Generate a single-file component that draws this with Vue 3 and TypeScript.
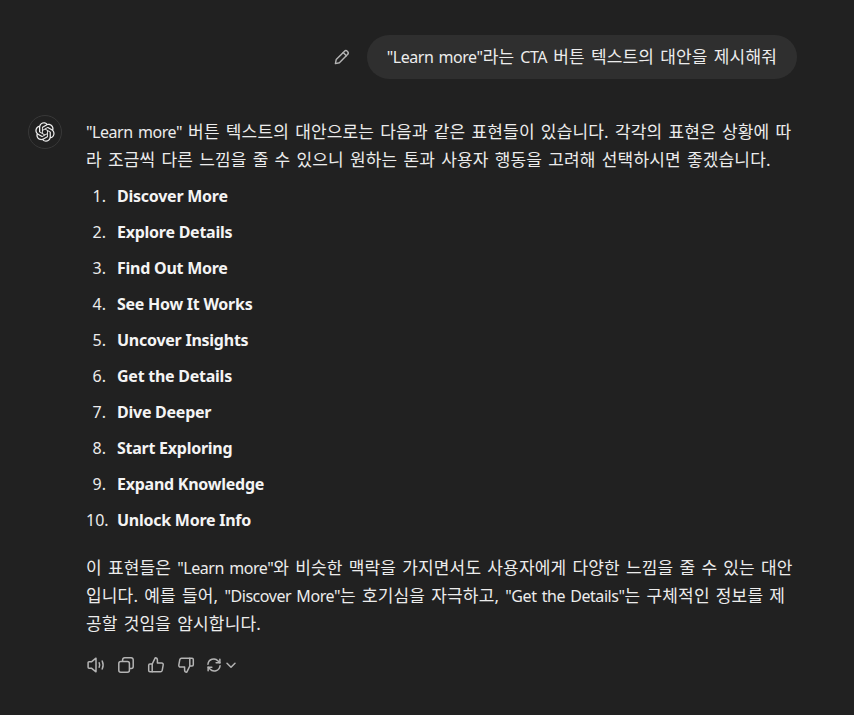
<script setup lang="ts">
const items: string[] = [
  'Discover More',
  'Explore Details',
  'Find Out More',
  'See How It Works',
  'Uncover Insights',
  'Get the Details',
  'Dive Deeper',
  'Start Exploring',
  'Expand Knowledge',
  'Unlock More Info',
]
</script>

<template>
  <main class="page">
    <section class="user-row">
      <svg class="pencil" width="18" height="18" viewBox="0 0 18 18" fill="none" stroke="currentColor" stroke-width="1.4" stroke-linejoin="round" stroke-linecap="round">
        <path d="M2.4 15.6l.8-4 8.1-8.2a2.2 2.2 0 0 1 3.2 3.2l-8.1 8.1z" />
        <path d="M10.2 4.6l3.2 3.2" />
      </svg>
      <div class="bubble korean"><span class="latin">"Learn more"</span>라는 <span class="latin">CTA</span> 버튼 텍스트의 대안을 제시해줘</div>
    </section>

    <section class="assistant-row">
      <div class="avatar">
        <svg width="20" height="20" viewBox="0 0 41 41" fill="currentColor">
          <path d="M37.5324 16.8707C37.9808 15.5241 38.1363 14.0974 37.9886 12.6859C37.8409 11.2744 37.3934 9.91076 36.676 8.68622C35.6126 6.83404 33.9882 5.3676 32.0373 4.4985C30.0864 3.62941 27.9098 3.40259 25.8215 3.85078C24.8796 2.7893 23.7219 1.94125 22.4257 1.36341C21.1295 0.785575 19.7249 0.491269 18.3058 0.500197C16.1708 0.495044 14.0893 1.16803 12.3614 2.42214C10.6335 3.67624 9.34853 5.44666 8.6917 7.47815C7.30085 7.76286 5.98686 8.3414 4.8377 9.17505C3.68854 10.0087 2.73073 11.0782 2.02839 12.312C0.956464 14.1591 0.498905 16.2988 0.721698 18.4228C0.944492 20.5467 1.83612 22.5449 3.268 24.1293C2.81966 25.4759 2.66413 26.9026 2.81182 28.3141C2.95951 29.7256 3.40701 31.0892 4.12437 32.3138C5.18791 34.1659 6.8123 35.6322 8.76321 36.5013C10.7141 37.3704 12.8907 37.5973 14.9789 37.1492C15.9208 38.2107 17.0786 39.0587 18.3747 39.6366C19.6709 40.2144 21.0755 40.5087 22.4946 40.4998C24.6307 40.5054 26.7133 39.8321 28.4418 38.5772C30.1704 37.3223 31.4556 35.5506 32.1119 33.5179C33.5027 33.2332 34.8167 32.6547 35.9659 31.821C37.115 30.9874 38.0728 29.9178 38.7752 28.684C39.8458 26.8371 40.3023 24.6979 40.0789 22.5748C39.8556 20.4517 38.9639 18.4544 37.5324 16.8707ZM22.4978 37.8849C20.7443 37.8874 19.0459 37.2733 17.6994 36.1501C17.7601 36.117 17.8666 36.0586 17.936 36.0161L25.9004 31.4156C26.1003 31.3019 26.2663 31.137 26.3813 30.9378C26.4964 30.7386 26.5563 30.5124 26.5549 30.2825V19.0542L29.9213 20.998C29.9389 21.0068 29.9541 21.0198 29.9656 21.0359C29.977 21.052 29.9842 21.0707 29.9867 21.0902V30.3889C29.9842 32.375 29.1946 34.2791 27.7909 35.6841C26.3872 37.0892 24.4838 37.8806 22.4978 37.8849ZM6.39227 31.0064C5.51397 29.4888 5.19742 27.7107 5.49804 25.9832C5.55718 26.0187 5.66048 26.0818 5.73461 26.1244L13.699 30.7248C13.8975 30.8408 14.1233 30.902 14.3532 30.902C14.583 30.902 14.8088 30.8408 15.0073 30.7248L24.731 25.1103V28.9979C24.7321 29.0177 24.7283 29.0376 24.7199 29.0556C24.7115 29.0736 24.6988 29.0893 24.6829 29.1012L16.6317 33.7497C14.9096 34.7416 12.8643 35.0097 10.9447 34.4954C9.02506 33.9811 7.38785 32.7263 6.39227 31.0064ZM4.29707 13.6194C5.17156 12.0998 6.55279 10.9364 8.19885 10.3327C8.19885 10.4013 8.19491 10.5228 8.19491 10.6071V19.808C8.19351 20.0378 8.25334 20.2638 8.36823 20.4629C8.48312 20.6619 8.64893 20.8267 8.84863 20.9404L18.5723 26.5542L15.206 28.4979C15.1894 28.5089 15.1703 28.5155 15.1505 28.5173C15.1307 28.5191 15.1107 28.516 15.0924 28.5082L7.04046 23.8557C5.32135 22.8601 4.06716 21.2235 3.55289 19.3046C3.03862 17.3858 3.30624 15.3413 4.29707 13.6194ZM31.955 20.0556L22.2312 14.4411L25.5976 12.4981C25.6142 12.4872 25.6333 12.4805 25.6531 12.4787C25.6729 12.4769 25.6928 12.4801 25.7111 12.4879L33.7631 17.1364C35.0277 17.8689 36.0577 18.9459 36.7327 20.2417C37.4077 21.5376 37.7 22.9992 37.5757 24.4552C37.4514 25.9112 36.9157 27.3002 36.0305 28.4602C35.1453 29.6202 33.9467 30.5023 32.5745 31.0034C32.5745 30.9339 32.5745 30.8125 32.5745 30.7282V21.2C32.5765 20.97 32.5175 20.75 32.4034 20.55C32.2892 20.35 32.1241 20.18 31.955 20.0556ZM35.3055 15.0128C35.2464 14.9765 35.1431 14.9142 35.069 14.8717L27.1045 10.2712C26.906 10.1554 26.6803 10.0943 26.4504 10.0943C26.2206 10.0943 25.9948 10.1554 25.7963 10.2712L16.0726 15.8858V11.9982C16.0715 11.9783 16.0753 11.9585 16.0837 11.9405C16.0921 11.9225 16.1048 11.9068 16.1207 11.8949L24.1719 7.25025C25.4053 6.53903 26.8158 6.19376 28.2383 6.25482C29.6608 6.31589 31.0364 6.78077 32.2044 7.59508C33.3723 8.40939 34.2842 9.53945 34.8334 10.8531C35.3826 12.1667 35.5464 13.6095 35.3055 15.0128ZM14.2424 21.9419L10.8752 19.9981C10.8576 19.9893 10.8423 19.9763 10.8309 19.9602C10.8195 19.9441 10.8122 19.9254 10.8098 19.9058V10.6071C10.8107 9.18295 11.2173 7.78848 11.9819 6.58696C12.7466 5.38544 13.8377 4.42659 15.1275 3.82264C16.4173 3.21869 17.8524 2.99464 19.2649 3.1767C20.6775 3.35876 22.0089 3.93941 23.1034 4.85067C23.0427 4.88379 22.937 4.94215 22.8668 4.98473L14.9024 9.58517C14.7025 9.69878 14.5366 9.86356 14.4215 10.0626C14.3065 10.2616 14.2466 10.4877 14.2479 10.7175L14.2424 21.9419ZM16.071 17.9991L20.4018 15.4978L24.7325 17.9975V22.9985L20.4018 25.4983L16.071 22.9985V17.9991Z" />
        </svg>
      </div>

      <div class="content">
        <p class="para korean"><span class="latin">"Learn more"</span> 버튼 텍스트의 대안으로는 다음과 같은 표현들이 있습니다. 각각의 표현은 상황에 따<br />라 조금씩 다른 느낌을 줄 수 있으니 원하는 톤과 사용자 행동을 고려해 선택하시면 좋겠습니다.</p>
        <ol class="list">
          <li v-for="(item, i) in items" :key="item" class="item">
            <span class="num">{{ i + 1 }}.</span>
            <strong class="label">{{ item }}</strong>
          </li>
        </ol>
        <p class="para closing korean">이 표현들은 <span class="latin">"Learn more"</span>와 비슷한 맥락을 가지면서도 사용자에게 다양한 느낌을 줄 수 있는 대안<br />입니다. 예를 들어, <span class="latin">"Discover More"</span>는 호기심을 자극하고, <span class="latin">"Get the Details"</span>는 구체적인 정보를 제<br />공할 것임을 암시합니다.</p>

        <div class="actions">
          <svg width="18" height="18" viewBox="0 0 18 18" fill="none" stroke="currentColor" stroke-width="1.5" stroke-linejoin="round" stroke-linecap="round">
            <path d="M2 5.8h2.4L9 2.2v13.6l-4.6-3.6H2a.9.9 0 0 1-.9-.9V6.7a.9.9 0 0 1 .9-.9z" />
            <path d="M12.2 6.8c.6 1.4.6 3 0 4.4" />
            <path d="M15.2 5c1.2 2.6 1.2 5.4 0 8" />
          </svg>
          <svg width="18" height="18" viewBox="0 0 18 18" fill="none" stroke="currentColor" stroke-width="1.5" stroke-linejoin="round">
            <rect x="1.8" y="5.6" width="10.6" height="10.6" rx="2" />
            <path d="M5.6 5.6V3.8a2 2 0 0 1 2-2h6.6a2 2 0 0 1 2 2v6.6a2 2 0 0 1-2 2h-1.8" />
          </svg>
          <svg width="18" height="18" viewBox="0 0 18 18" fill="none" stroke="currentColor" stroke-width="1.5" stroke-linejoin="round" stroke-linecap="round">
            <path d="M5.2 8l3-6.2c1.3 0 2.2 1 2.2 2.3V7h4.2c1 0 1.8.9 1.6 1.9l-1 5.4c-.2.9-.9 1.5-1.8 1.5H5.2z" />
            <path d="M5.2 8H2.9c-.7 0-1.2.5-1.2 1.2v5.4c0 .7.5 1.2 1.2 1.2h2.3" />
          </svg>
          <svg width="18" height="18" viewBox="0 0 18 18" fill="none" stroke="currentColor" stroke-width="1.5" stroke-linejoin="round" stroke-linecap="round">
            <path d="M12.8 10l-3 6.2c-1.3 0-2.2-1-2.2-2.3V11H3.4c-1 0-1.8-.9-1.6-1.9l1-5.4c.2-.9.9-1.5 1.8-1.5h8.2z" />
            <path d="M12.8 10h2.3c.7 0 1.2-.5 1.2-1.2V3.4c0-.7-.5-1.2-1.2-1.2h-2.3" />
          </svg>
          <span class="regen">
            <svg width="16" height="16" viewBox="0 0 18 18" fill="none" stroke="currentColor" stroke-width="1.7" stroke-linejoin="round" stroke-linecap="round">
              <path d="M2.2 8.2A6.6 6.6 0 0 1 13.6 4.4L15.6 6.6" />
              <path d="M15.6 2.4v4.2h-4.2" />
              <path d="M15.8 9.8A6.6 6.6 0 0 1 4.4 13.6L2.4 11.4" />
              <path d="M2.4 15.6v-4.2h4.2" />
            </svg>
            <svg class="chev" width="12" height="12" viewBox="0 0 12 12" fill="none" stroke="currentColor" stroke-width="1.5" stroke-linecap="round" stroke-linejoin="round">
              <path d="M2 4.2l4 4 4-4" />
            </svg>
          </span>
        </div>
      </div>
    </section>
  </main>
</template>

<style>
html,
body {
  background: #212121;
}
</style>

<style scoped>
.page {
  width: 854px;
  height: 715px;
  box-sizing: border-box;
  overflow: hidden;
  padding-top: 35px;
  background: #212121;
  color: #ececec;
  font-family: "Noto Sans", "Noto Sans CJK KR", sans-serif;
  font-size: 16px;
  line-height: 28px;
}

.korean {
  font-size: 17px;
  letter-spacing: 0.17px;
  word-spacing: 1.5px;
}

.latin {
  font-size: 16px;
  letter-spacing: -0.45px;
  word-spacing: 1.5px;
}

.user-row {
  display: flex;
  justify-content: flex-end;
  align-items: center;
  gap: 16px;
  padding-right: 57px;
}

.pencil {
  color: #b4b4b4;
}

.bubble {
  height: 44px;
  box-sizing: border-box;
  padding: 8px 20px;
  border-radius: 22px;
  background: #2f2f2f;
  white-space: nowrap;
}

.assistant-row {
  display: flex;
  gap: 24px;
  margin-top: 36px;
  padding-left: 28px;
}

.avatar {
  flex: none;
  width: 34px;
  height: 34px;
  box-sizing: border-box;
  display: flex;
  align-items: center;
  justify-content: center;
  border: 1px solid #383838;
  border-radius: 50%;
}

.content {
  padding-top: 3px;
}

.para {
  margin: 0;
  white-space: nowrap;
}

.list {
  display: flex;
  flex-direction: column;
  gap: 8px;
  margin: 8px 0 0;
  padding: 0;
  list-style: none;
}

.item {
  display: flex;
  gap: 11px;
}

.num {
  width: 20px;
  text-align: right;
}

.label {
  font-weight: 700;
  letter-spacing: -0.25px;
  color: #f4f4f4;
}

.closing {
  margin-top: 20px;
}

.actions {
  display: flex;
  align-items: center;
  gap: 12px;
  margin-top: 18px;
  padding-left: 1px;
  color: #b4b4b4;
}

.regen {
  display: flex;
  align-items: center;
  gap: 3px;
  margin-left: -1px;
}
</style>
